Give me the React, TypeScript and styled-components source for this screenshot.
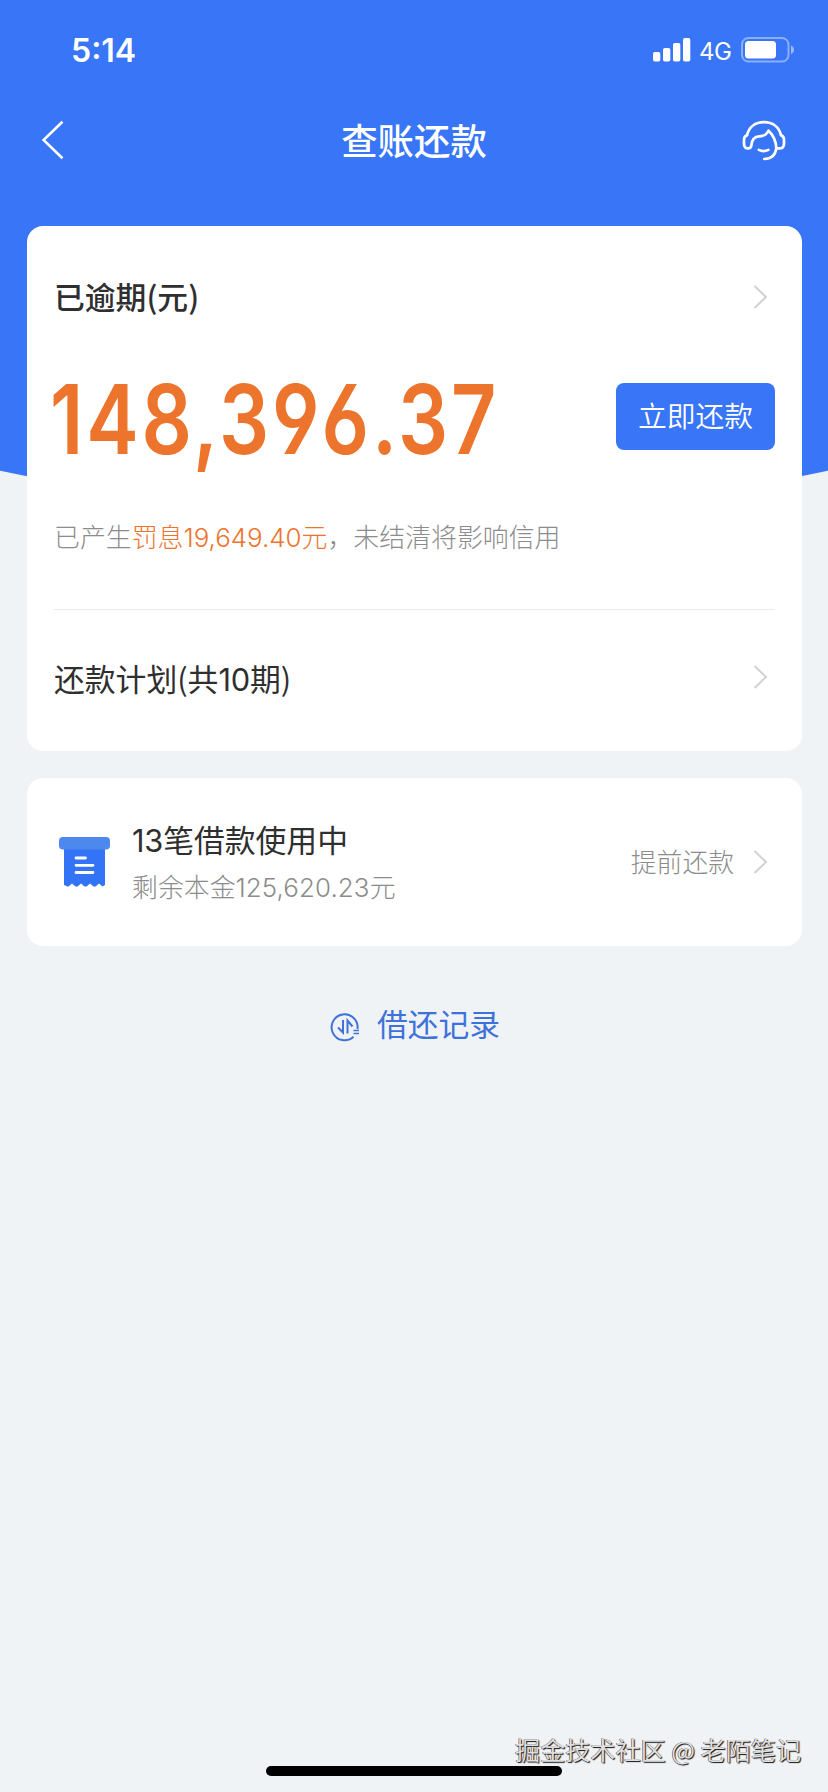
import React from "react";
import styled, { createGlobalStyle } from "styled-components";

const BLUE = "#3875f7";
const ORANGE = "#ec742c";
const CANVAS = "#eff3f6";
const TEXT_FONT = `Inter, "Noto Sans CJK SC", sans-serif`;
const CJK_FONT = `"Noto Sans CJK SC", sans-serif`;

const GlobalStyle = createGlobalStyle`
  * { box-sizing: border-box; }
  body { margin: 0; font-family: ${CJK_FONT}; }
`;

const Page = styled.div`
  width: 828px;
  height: 1792px;
  display: flex;
  flex-direction: column;
  overflow: hidden;
  background: radial-gradient(circle 2100px at 50% -1486px, ${BLUE} 1999.5px, ${CANVAS} 2000.5px);
`;

const StatusBar = styled.header`
  height: 98px;
  padding: 0 33px 0 71px;
  display: flex;
  align-items: center;
  justify-content: space-between;
  color: #fff;
  font-family: ${TEXT_FONT};
`;

const Clock = styled.span`
  font-size: 32px;
  font-weight: 600;
  line-height: 40px;
  padding-top: 4px;
`;

const StatusIcons = styled.div`
  padding-top: 1px;
  display: flex;
  align-items: center;

  svg { flex: none; }
`;

const Network = styled.span`
  width: 50px;
  padding-left: 8px;
  padding-top: 4px;
  font-size: 24px;
  line-height: 28px;
  letter-spacing: -0.5px;
`;

const NavBar = styled.nav`
  height: 84px;
  margin-bottom: 44px;
  padding: 0 42px;
  display: grid;
  grid-template-columns: 60px 1fr 60px;
  align-items: center;
  color: #fff;

  svg { display: block; }
  svg:last-child { justify-self: end; }
`;

const NavTitle = styled.h1`
  margin: 0;
  padding-bottom: 3px;
  text-align: center;
  font-size: 36.4px;
  font-weight: 500;
  line-height: 48px;
`;

const Card = styled.section<{ $height: number }>`
  height: ${(p) => p.$height}px;
  margin: 0 26px 27px 27px;
  padding: 0 27px;
  flex: none;
  border-radius: 16px;
  background: #fff;
`;

const Row = styled.div<{ $height: number; $divided?: boolean }>`
  height: ${(p) => p.$height}px;
  display: flex;
  align-items: center;
  justify-content: space-between;
  border-bottom: ${(p) => (p.$divided ? "1px solid #ebebeb" : "none")};
`;

const RowTitle = styled.h2<{ $strong?: boolean }>`
  margin: 0;
  padding-bottom: 3px;
  color: #2f2f2f;
  font-size: 30.8px;
  font-weight: ${(p) => (p.$strong ? 500 : 400)};
  line-height: 40px;
`;

const Digits = styled.span<{ $spacing: number }>`
  font-family: ${TEXT_FONT};
  letter-spacing: ${(p) => p.$spacing}px;
`;

const ChevronBox = styled.span<{ $lift?: number; $gap?: number }>`
  margin: 0 7px ${(p) => p.$lift ?? 0}px ${(p) => p.$gap ?? 0}px;
  display: flex;
`;

const Amount = styled.strong`
  margin-left: -4px;
  padding-top: 6px;
  color: ${ORANGE};
  font-family: Inter, sans-serif;
  font-size: 96px;
  font-weight: 600;
  line-height: 96px;
  letter-spacing: 3.5px;
  font-feature-settings: "cv03", "cv04";
  white-space: nowrap;
  transform: scaleX(0.82);
  transform-origin: left;
`;

const PayButton = styled.button`
  width: 159px;
  height: 67px;
  padding: 0 0 2px;
  flex: none;
  border: 0;
  border-radius: 8px;
  background: ${BLUE};
  color: #fff;
  font: 350 28.8px/40px ${CJK_FONT};
`;

const Note = styled.p`
  margin: 0;
  color: #8c8c8c;
  font-size: 25.9px;
  font-weight: 300;
  line-height: 36px;
  white-space: nowrap;
`;

const Penalty = styled.span`
  color: ${ORANGE};
`;

const LoanIconBox = styled.span`
  width: 78px;
  padding-left: 5px;
  display: flex;
`;

const LoanInfo = styled.div`
  flex: 1;
  display: flex;
  flex-direction: column;
  gap: 4px;
`;

const LoanAction = styled.span`
  padding-bottom: 2px;
  color: #8c8c8c;
  font-size: 25.8px;
  font-weight: 300;
  line-height: 36px;
`;

const RecordsLink = styled.a`
  margin-top: 31px;
  padding-left: 2px;
  display: flex;
  align-items: center;
  justify-content: center;
  gap: 17px;
  color: #3e72da;
`;

const RecordsLabel = styled.span`
  padding-bottom: 7px;
  font-size: 30.8px;
  line-height: 38px;
`;

const BottomArea = styled.footer`
  margin-top: auto;
  height: 62px;
  display: flex;
  flex-direction: column;
  align-items: center;
`;

const Watermark = styled.div`
  align-self: flex-end;
  height: 36px;
  padding-right: 27px;
  color: #dedfe0;
  font-size: 25.1px;
  line-height: 38px;
  white-space: nowrap;
  text-shadow: 1px 1px 1px #111, -0.5px -0.5px 0.5px #444;
`;

const HomeIndicator = styled.div`
  width: 296px;
  height: 10px;
  border-radius: 5px;
  background: #000;
`;

function Chevron({ lift, gap }: { lift?: number; gap?: number }) {
  return (
    <ChevronBox $lift={lift} $gap={gap}>
      <svg width="15" height="24" viewBox="0 0 15 24" fill="none">
        <path d="M1.5 1 13 12 1.5 23" stroke="#d2d2d2" strokeWidth="2" />
      </svg>
    </ChevronBox>
  );
}

function SignalIcon() {
  return (
    <svg width="38" height="24" viewBox="0 0 38 24" fill="#fff">
      <rect x="0" y="14" width="7.3" height="9.5" rx="1.8" />
      <rect x="10" y="10" width="7.3" height="13.5" rx="1.8" />
      <rect x="20" y="5" width="7.3" height="18.5" rx="1.8" />
      <rect x="30" y="0" width="7.3" height="23.5" rx="1.8" />
    </svg>
  );
}

function BatteryIcon() {
  return (
    <svg width="54" height="26" viewBox="0 0 54 26" fill="none">
      <rect x="1" y="1" width="46.5" height="23.5" rx="6.5" stroke="#fff" strokeOpacity=".42" strokeWidth="2" />
      <rect x="4" y="4" width="31" height="17.5" rx="3.5" fill="#fff" />
      <path d="M50 8.5c4 1.5 4 7 0 8.5z" fill="#fff" fillOpacity=".5" />
    </svg>
  );
}

function BackIcon() {
  return (
    <svg width="22" height="40" viewBox="0 0 22 40" fill="none">
      <path d="M20.5 1.7 1.5 20l19 18.3" stroke="#fff" strokeWidth="2.6" />
    </svg>
  );
}

function ServiceIcon() {
  return (
    <svg width="44" height="42" viewBox="0 -0.7 44 42" fill="none" stroke="#fff" strokeWidth="2.7" strokeLinecap="round" strokeLinejoin="round">
      <path d="M5 15.5C7 7 13.5 2.4 22 2.4S37 7 39 15.5" />
      <path d="M5 15.5c-2.4.8-3 2.2-3 4.5v4c0 3.2 1.5 4.7 4.2 4.7 2.1 0 3-1 3.2-3.2.5-6 3-8.7 7.8-8.9 4.5-.2 7.2-1 9.4-5.6 4.2 4 7.4 8.4 7.7 17.6" />
      <path d="M39 15.5c2.5.8 3 2.2 3 4.5v4c0 3.2-1.8 4.7-4.5 4.7h-3.2c-1 7.1-4.5 10.6-12 10.6" />
      <path d="M16.8 30.2c2.8 1.5 6.8 1.5 9.6 0" />
    </svg>
  );
}

function LoanIcon() {
  return (
    <svg width="51" height="50" viewBox="0 0 51 50" fill="none">
      <path d="M5 10h41v38l-2.5 1.5-3.5-3-3.5 3h-2l-3.5-3-3.5 3h-2l-3.5-3-3.5 3h-2l-3.5-3-3.5 3h-1L5 48z" fill="#3373f6" />
      <rect width="51" height="12.5" rx="4" fill="#4c88ed" />
      <path d="M17 21h9.5M17 28.3h17M17 35.5h17" stroke="#fff" strokeWidth="2.8" strokeLinecap="round" />
    </svg>
  );
}

function RecordsIcon() {
  return (
    <svg width="30" height="30" viewBox="0 0 30 30" fill="none" stroke="currentColor" strokeWidth="2">
      <path d="M27.5 17A13 13 0 1 0 23.5 24.8" />
      <path d="M8 15.5l5 5V8M17.5 21.5V8.5l5 6" />
      <path d="M23.5 18.5H29M23.5 21.5H29" strokeWidth="1.5" />
    </svg>
  );
}

export default function App() {
  return (
    <Page>
      <GlobalStyle />
      <StatusBar>
        <Clock>5:14</Clock>
        <StatusIcons>
          <SignalIcon />
          <Network>4G</Network>
          <BatteryIcon />
        </StatusIcons>
      </StatusBar>

      <NavBar>
        <BackIcon />
        <NavTitle>查账还款</NavTitle>
        <ServiceIcon />
      </NavBar>

      <Card $height={525}>
        <Row $height={142}>
          <RowTitle $strong>已逾期(元)</RowTitle>
          <Chevron />
        </Row>
        <Row $height={96}>
          <Amount>148,396.37</Amount>
          <PayButton>立即还款</PayButton>
        </Row>
        <Row $height={146} $divided>
          <Note>
            已产生
            <Penalty>
              罚息<Digits $spacing={0}>19,649.40</Digits>元
            </Penalty>
            ，未结清将影响信用
          </Note>
        </Row>
        <Row $height={141}>
          <RowTitle>
            还款计划(共<Digits $spacing={-0.2}>10</Digits>期)
          </RowTitle>
          <Chevron lift={8} />
        </Row>
      </Card>

      <Card $height={168}>
        <Row $height={168}>
          <LoanIconBox>
            <LoanIcon />
          </LoanIconBox>
          <LoanInfo>
            <RowTitle>
              <Digits $spacing={-0.2}>13</Digits>笔借款使用中
            </RowTitle>
            <Note>
              剩余本金<Digits $spacing={0.1}>125,620.23</Digits>元
            </Note>
          </LoanInfo>
          <LoanAction>提前还款</LoanAction>
          <Chevron gap={19} />
        </Row>
      </Card>

      <RecordsLink>
        <RecordsIcon />
        <RecordsLabel>借还记录</RecordsLabel>
      </RecordsLink>

      <BottomArea>
        <Watermark>掘金技术社区 @ 老陌笔记</Watermark>
        <HomeIndicator />
      </BottomArea>
    </Page>
  );
}
